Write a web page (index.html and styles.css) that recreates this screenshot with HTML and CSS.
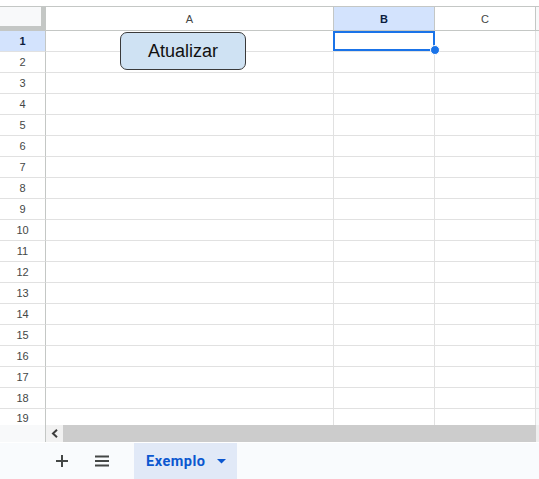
FILE: index.html
```html
<!DOCTYPE html>
<html>
<head>
<meta charset="utf-8">
<link rel="stylesheet" href="styles.css">
</head>
<body>
<div class="sheet">
  <div class="topstrip"></div>
  <div class="grid">
    <div class="row head">
      <div class="corner"></div>
      <div class="ch">A</div>
      <div class="ch selh">B</div>
      <div class="ch">C</div>
      <div class="edge"></div>
    </div>
    <div class="row"><div class="rh selh">1</div><div class="c"></div><div class="c"></div><div class="c"></div><div class="edge"></div></div>
    <div class="row"><div class="rh">2</div><div class="c"></div><div class="c"></div><div class="c"></div><div class="edge"></div></div>
    <div class="row"><div class="rh">3</div><div class="c"></div><div class="c"></div><div class="c"></div><div class="edge"></div></div>
    <div class="row"><div class="rh">4</div><div class="c"></div><div class="c"></div><div class="c"></div><div class="edge"></div></div>
    <div class="row"><div class="rh">5</div><div class="c"></div><div class="c"></div><div class="c"></div><div class="edge"></div></div>
    <div class="row"><div class="rh">6</div><div class="c"></div><div class="c"></div><div class="c"></div><div class="edge"></div></div>
    <div class="row"><div class="rh">7</div><div class="c"></div><div class="c"></div><div class="c"></div><div class="edge"></div></div>
    <div class="row"><div class="rh">8</div><div class="c"></div><div class="c"></div><div class="c"></div><div class="edge"></div></div>
    <div class="row"><div class="rh">9</div><div class="c"></div><div class="c"></div><div class="c"></div><div class="edge"></div></div>
    <div class="row"><div class="rh">10</div><div class="c"></div><div class="c"></div><div class="c"></div><div class="edge"></div></div>
    <div class="row"><div class="rh">11</div><div class="c"></div><div class="c"></div><div class="c"></div><div class="edge"></div></div>
    <div class="row"><div class="rh">12</div><div class="c"></div><div class="c"></div><div class="c"></div><div class="edge"></div></div>
    <div class="row"><div class="rh">13</div><div class="c"></div><div class="c"></div><div class="c"></div><div class="edge"></div></div>
    <div class="row"><div class="rh">14</div><div class="c"></div><div class="c"></div><div class="c"></div><div class="edge"></div></div>
    <div class="row"><div class="rh">15</div><div class="c"></div><div class="c"></div><div class="c"></div><div class="edge"></div></div>
    <div class="row"><div class="rh">16</div><div class="c"></div><div class="c"></div><div class="c"></div><div class="edge"></div></div>
    <div class="row"><div class="rh">17</div><div class="c"></div><div class="c"></div><div class="c"></div><div class="edge"></div></div>
    <div class="row"><div class="rh">18</div><div class="c"></div><div class="c"></div><div class="c"></div><div class="edge"></div></div>
    <div class="row last"><div class="rh">19</div><div class="c"></div><div class="c"></div><div class="c"></div><div class="edge"></div></div>

    <button class="update-btn">Atualizar</button>
    <div class="selection"><span class="handle"></span></div>
  </div>

  <div class="hscroll">
    <div class="hs-left"></div>
    <div class="hs-btn">
      <svg width="8" height="9" viewBox="0 0 8 9"><polyline points="6,0.8 2,4.5 6,8.2" fill="none" stroke="#3c3c3c" stroke-width="2"/></svg>
    </div>
    <div class="hs-track"></div>
    <div class="hs-end"></div>
  </div>

  <div class="tabbar">
    <div class="tb-icon">
      <svg width="14" height="14" viewBox="0 0 14 14"><path d="M7 1v12M1 7h12" stroke="#444746" stroke-width="2" fill="none"/></svg>
    </div>
    <div class="tb-icon">
      <svg width="16" height="12" viewBox="0 0 16 12"><path d="M1 1.5h14M1 6h14M1 10.5h14" stroke="#444746" stroke-width="2" fill="none"/></svg>
    </div>
    <div class="tab">
      <span class="tab-name">Exemplo</span>
      <svg width="9" height="5" viewBox="0 0 9 5"><polygon points="0,0 9,0 4.5,4.5" fill="#0b57d0"/></svg>
    </div>
  </div>
</div>
</body>
</html>
```

FILE: styles.css
```css
html, body {
  margin: 0;
  padding: 0;
  background: #ffffff;
}
.sheet {
  width: 539px;
  height: 479px;
  overflow: hidden;
  font-family: "Liberation Sans", Arial, sans-serif;
}
.topstrip {
  height: 6px;
  border-bottom: 1px solid #c4c7c5;
}
.grid {
  position: relative;
  height: 418px;
  overflow: hidden;
}
.row {
  display: grid;
  grid-template-columns: 46px 288px 101px 101px 1fr;
  height: 21px;
}
.row.head {
  height: 24px;
}
.row.last {
  height: 16px;
}
.row.last .rh {
  align-items: flex-start;
  padding-top: 3px;
}
.corner {
  background: #f8f9fa;
  border-right: 5px solid #c4c7c5;
  border-bottom: 5px solid #c4c7c5;
}
.ch {
  display: flex;
  align-items: center;
  justify-content: center;
  font-size: 11px;
  color: #444746;
  border-right: 1px solid #c4c7c5;
  border-bottom: 1px solid #c4c7c5;
  padding-top: 1px;
}
.rh {
  display: flex;
  align-items: center;
  justify-content: center;
  font-size: 11px;
  color: #444746;
  border-right: 1px solid #c4c7c5;
  border-bottom: 1px solid #e1e1e1;
}
.selh {
  background: #d3e3fd;
  color: #0b1d3f;
  font-weight: bold;
}
.c {
  border-right: 1px solid #e1e1e1;
  border-bottom: 1px solid #e1e1e1;
}
.last .c, .last .rh, .last .edge {
  border-bottom: none;
}
.edge {
  background: #f8f9fa;
  border-bottom: 1px solid #e1e1e1;
}
.head .edge {
  border-bottom: 1px solid #c4c7c5;
}
.update-btn {
  position: absolute;
  left: 120px;
  top: 25px;
  width: 126px;
  height: 38px;
  box-sizing: border-box;
  background: #cfe2f3;
  border: 1px solid #3a3a3a;
  border-radius: 7px;
  font-family: "Liberation Sans", Arial, sans-serif;
  font-size: 18px;
  color: #111111;
  padding: 0;
  margin: 0;
}
.selection {
  position: absolute;
  left: 333px;
  top: 24px;
  width: 102px;
  height: 20px;
  box-sizing: border-box;
  border: 2px solid #1a73e8;
}
.handle {
  position: absolute;
  right: -7px;
  bottom: -6px;
  width: 8px;
  height: 8px;
  border-radius: 50%;
  background: #1a73e8;
  border: 1px solid #ffffff;
}
.hscroll {
  display: grid;
  grid-template-columns: 46px 17px 473px 1fr;
  height: 17px;
}
.hs-left {
  background: #f8f9fa;
  border-right: 1px solid #c4c7c5;
}
.hs-btn {
  background: #f1f1f1;
  display: flex;
  align-items: center;
  justify-content: center;
}
.hs-track {
  background: #cccccc;
}
.hs-end {
  background: #eeeeee;
}
.tabbar {
  height: 37px;
  box-sizing: border-box;
  border-top: 1px solid #ffffff;
  background: #f9fbfd;
  display: flex;
  align-items: stretch;
  padding-left: 55px;
}
.tb-icon {
  width: 14px;
  display: flex;
  align-items: center;
  justify-content: center;
  margin-right: 25px;
}
.tb-icon + .tb-icon {
  width: 16px;
  margin-right: 24px;
}
.tab {
  width: 103px;
  box-sizing: border-box;
  background: #e1e9f7;
  display: flex;
  align-items: center;
  padding-left: 12px;
  gap: 12px;
}
.tab-name {
  font-family: Roboto, "Liberation Sans", sans-serif;
  font-weight: bold;
  font-size: 14.5px;
  color: #0b57d0;
  letter-spacing: 0.5px;
}
```
